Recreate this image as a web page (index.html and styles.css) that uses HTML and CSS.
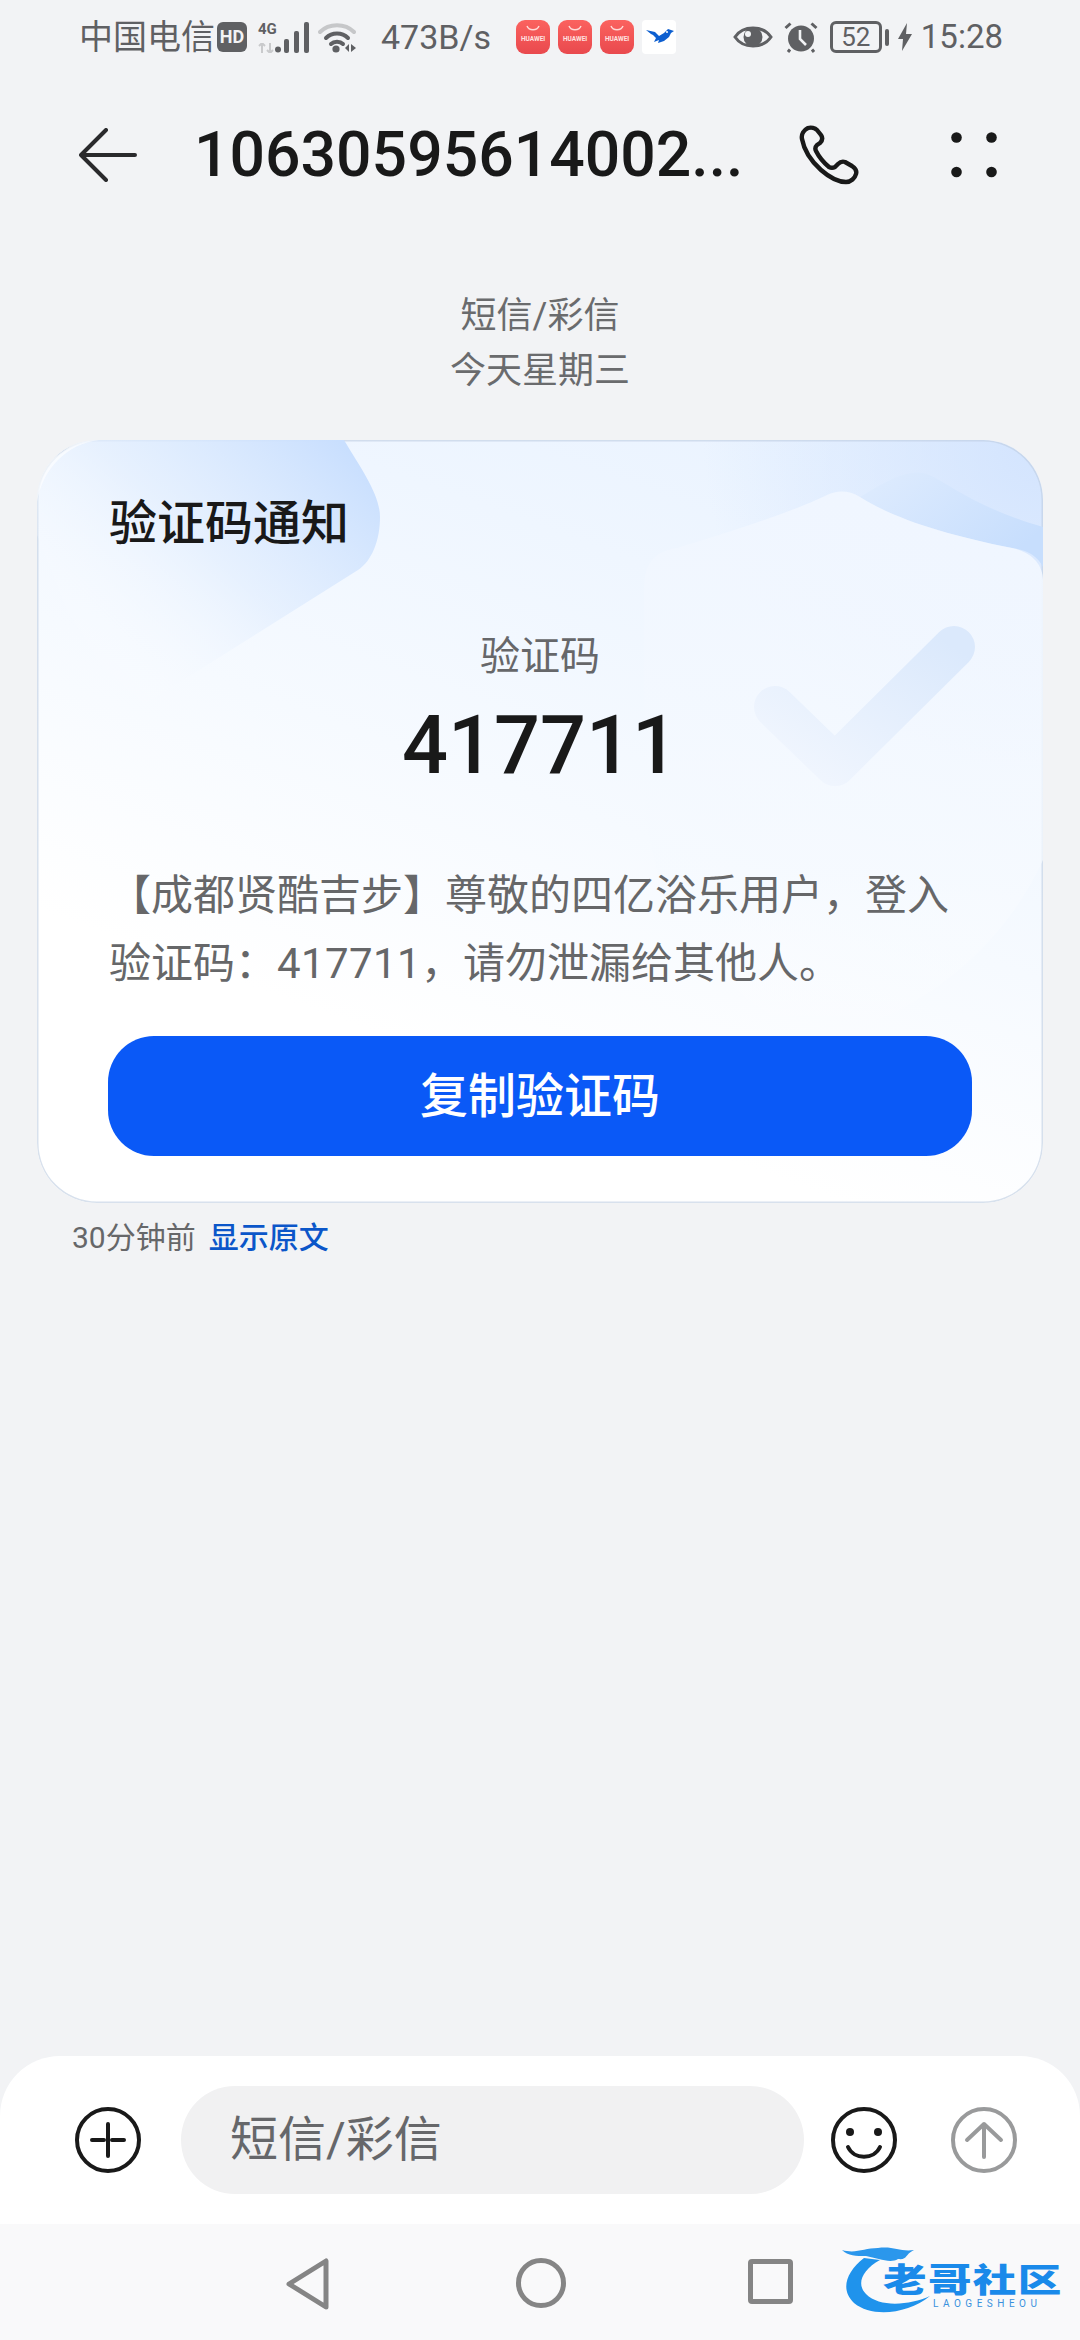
FILE: index.html
```html
<!DOCTYPE html>
<html lang="zh-CN">
<head>
<meta charset="utf-8">
<title>短信</title>
<link rel="stylesheet" href="styles.css">
</head>
<body>
<div class="phone">
  <header class="status">
    <div class="status-left">
      <span class="carrier">中国电信</span>
      <span class="hd">HD</span>
      <span class="signal">
        <span class="net"><span class="net-4g">4G</span>
          <svg class="net-arrows" viewBox="0 0 16 10" width="16" height="10"><path d="M4 0v10M1 3l3-3 3 3M12 0v10M9 7l3 3 3-3" fill="none" stroke="#c9cacc" stroke-width="2"/></svg>
        </span>
        <svg class="bars" viewBox="0 0 34 31" width="34" height="31"><circle cx="3" cy="27.500" r="3" fill="#5f6063"/><rect x="9" y="17" width="5" height="14" rx="2" fill="#5f6063"/><rect x="19" y="9" width="5" height="22" rx="2" fill="#5f6063"/><rect x="29" y="0" width="5" height="31" rx="2" fill="#5f6063"/></svg>
      </span>
      <svg class="wifi" viewBox="0 0 38 32" width="38" height="32"><path d="M2 11C11 2 27 2 36 11" fill="none" stroke="#c6c7c9" stroke-width="4" stroke-linecap="round"/><path d="M8 17C14 11 24 11 30 17" fill="none" stroke="#5f6063" stroke-width="4" stroke-linecap="round"/><path d="M13 23C16 20 22 20 25 23" fill="none" stroke="#5f6063" stroke-width="4" stroke-linecap="round"/><circle cx="18" cy="28" r="3.600" fill="#5f6063"/><path d="M27 27l4-4v8zM33 23l5 4-5 4z" fill="#5f6063"/></svg>
      <span class="speed">473B/s</span>
      <span class="apps">
        <span class="app"><svg class="app-smile" viewBox="0 0 14 6" width="14" height="6"><path d="M1 1C3 6 11 6 13 1" fill="none" stroke="#ffd9d6" stroke-width="1.500"/></svg><span class="app-name">HUAWEI</span></span>
        <span class="app"><svg class="app-smile" viewBox="0 0 14 6" width="14" height="6"><path d="M1 1C3 6 11 6 13 1" fill="none" stroke="#ffd9d6" stroke-width="1.500"/></svg><span class="app-name">HUAWEI</span></span>
        <span class="app"><svg class="app-smile" viewBox="0 0 14 6" width="14" height="6"><path d="M1 1C3 6 11 6 13 1" fill="none" stroke="#ffd9d6" stroke-width="1.500"/></svg><span class="app-name">HUAWEI</span></span>
        <span class="app app-bird"><svg viewBox="0 0 34 34" width="34" height="34"><path d="M4 10l9 2 4 4 5-3 4-4 6 2-3 2-2 4-5 4-6 2 1-3-5 2 2-4-3-3-2-1z" fill="#0d5fd0"/><circle cx="25" cy="12" r="1" fill="#fff"/></svg></span>
      </span>
    </div>
    <div class="status-right">
      <svg class="eye" viewBox="0 0 40 26" width="40" height="26"><path d="M2 13C10 1 30 1 38 13 30 25 10 25 2 13Z" fill="none" stroke="#5f6063" stroke-width="3"/><circle cx="20" cy="13" r="9.500" fill="#5f6063"/><circle cx="15" cy="10" r="3" fill="#f2f3f5"/></svg>
      <svg class="alarm" viewBox="0 0 34 31" width="34" height="31"><circle cx="17" cy="16.500" r="13" fill="#5f6063"/><path d="M1.500 6L6.500 1.500M32.500 6L27.500 1.500M6 27.500L4 30M28 27.500L30 30" stroke="#5f6063" stroke-width="3" fill="none"/><path d="M16 8v9l6 6" stroke="#f2f3f5" stroke-width="2.600" fill="none"/></svg>
      <span class="battery"><span class="battery-box">52</span><span class="battery-nub"></span></span>
      <svg class="bolt" viewBox="0 0 14 28" width="14" height="28"><path d="M9 0L0 16h5l-1 12 10-17H8z" fill="#5f6063"/></svg>
      <span class="clock">15:28</span>
    </div>
  </header>

  <nav class="toolbar">
    <svg class="back" viewBox="0 0 58 54" width="58" height="54"><path d="M27 2L2 27l25 25M2 27h54" fill="none" stroke="#2a2a2c" stroke-width="4" stroke-linecap="round" stroke-linejoin="round"/></svg>
    <h1 class="title">10630595614002...</h1>
    <svg class="call" viewBox="0 0 60 60" width="60" height="60"><path d="M9 3C5 5 2 9 3 14 5 25 12 36 22 45 30 52 39 57 47 57 52 57 56 53 57 49 58 46 56 43 53 41L46 37C43 36 41 37 39 39L36 42C34 43 32 43 30 42 24 37 20 32 17 26 16 24 16 22 18 20L21 18C23 16 24 13 22 10L18 5C16 3 12 2 9 3Z" fill="none" stroke="#191919" stroke-width="4.400" stroke-linejoin="round"/></svg>
    <svg class="more" viewBox="0 0 46 46" width="46" height="46"><circle cx="5.500" cy="5.500" r="5.300" fill="#191919"/><circle cx="40.500" cy="5.500" r="5.300" fill="#191919"/><circle cx="5.500" cy="40" r="5.300" fill="#191919"/><circle cx="40.500" cy="40" r="5.300" fill="#191919"/></svg>
  </nav>

  <main class="thread">
    <div class="thread-head">
      <p class="thread-line">短信/彩信</p>
      <p class="thread-line">今天星期三</p>
    </div>
    <article class="card">
      <svg class="card-art" viewBox="0 0 1006 763" width="1006" height="763" preserveAspectRatio="none">
        <defs>
          <linearGradient id="blob" x1="1" y1="0.15" x2="0.15" y2="0.85"><stop offset="0" stop-color="#c9dffe"/><stop offset="0.5" stop-color="#e2eefe" stop-opacity="0.7"/><stop offset="1" stop-color="#ffffff" stop-opacity="0"/></linearGradient>
          <linearGradient id="band" x1="0" y1="0" x2="1" y2="0.6"><stop offset="0" stop-color="#dfecfe"/><stop offset="1" stop-color="#c7defd"/></linearGradient>
          <linearGradient id="shield" x1="0.5" y1="0" x2="0.5" y2="1"><stop offset="0" stop-color="#f0f6ff"/><stop offset="0.7" stop-color="#f6faff" stop-opacity="0.7"/><stop offset="1" stop-color="#ffffff" stop-opacity="0"/></linearGradient>
          <linearGradient id="tick" x1="1" y1="0" x2="0" y2="1"><stop offset="0" stop-color="#dbe9fc"/><stop offset="1" stop-color="#f1f6fe"/></linearGradient>
        </defs>
        <path d="M823 57C850 40 870 30 886 33 905 37 930 65 1006 87V127C1000 115 990 110 975 108 910 95 860 80 823 57Z" fill="url(#band)"/>
        <path d="M607 150C607 125 615 112 640 108 700 90 760 70 790 55 800 50 812 50 823 57 860 80 910 95 975 108 995 112 1006 125 1006 140V420C960 520 870 580 780 600 690 560 607 480 607 340Z" fill="url(#shield)"/>
        <path d="M307 0C325 30 343 55 343 77 343 100 335 121 321 130L94 273 30 170 0 95V60C0 30 30 0 60 0Z" fill="url(#blob)"/>
        <path d="M0 62C6 28 30 4 62 0L42 0 0 30Z" fill="#ffffff" opacity="0.6"/>
        <path d="M738 267L798 325 917 207" fill="none" stroke="url(#tick)" stroke-width="42" stroke-linecap="round" stroke-linejoin="round"/>
      </svg>
      <h2 class="card-title">验证码通知</h2>
      <p class="code-label">验证码</p>
      <p class="code">417711</p>
      <p class="card-body">【成都贤酷吉步】尊敬的四亿浴乐用户，登入<br>验证码：<span class="digits">417711</span>，请勿泄漏给其他人。</p>
      <button class="copy" type="button">复制验证码</button>
    </article>
    <p class="meta"><span class="meta-time">30分钟前</span><a class="meta-link">显示原文</a></p>
  </main>

  <section class="composer">
    <svg class="tool" viewBox="0 0 66 66" width="66" height="66"><circle cx="33" cy="33" r="31" fill="none" stroke="#191919" stroke-width="4"/><path d="M33 17V49M17 33H29M37 33H49" fill="none" stroke="#191919" stroke-width="4" stroke-linecap="round"/></svg>
    <div class="input">短信/彩信</div>
    <svg class="tool" viewBox="0 0 66 66" width="66" height="66"><circle cx="33" cy="33" r="31" fill="none" stroke="#191919" stroke-width="4"/><circle cx="19" cy="25" r="4" fill="#191919"/><circle cx="47" cy="25" r="4" fill="#191919"/><path d="M17 40C23 53 43 53 49 40" fill="none" stroke="#191919" stroke-width="4" stroke-linecap="round"/></svg>
    <svg class="tool tool-send" viewBox="0 0 66 66" width="66" height="66"><circle cx="33" cy="33" r="31" fill="none" stroke="#999a9b" stroke-width="4"/><path d="M33 50V17M16 33L33 17 50 33" fill="none" stroke="#999a9b" stroke-width="4" stroke-linecap="round" stroke-linejoin="round"/></svg>
  </section>

  <footer class="navbar">
    <svg class="nav-back" viewBox="0 0 44 52" width="44" height="52"><path d="M40 3V49L3 26Z" fill="none" stroke="#858585" stroke-width="5" stroke-linejoin="round"/></svg>
    <svg class="nav-home" viewBox="0 0 50 50" width="50" height="50"><circle cx="25" cy="25" r="22.500" fill="none" stroke="#858585" stroke-width="5"/></svg>
    <span class="nav-recent"></span>
    <div class="logo">
      <svg class="logo-dragon" viewBox="0 0 110 72" width="110" height="72"><path d="M22 16C4 30-2 48 12 61 30 76 66 72 88 54 68 63 38 66 24 52 14 42 20 28 38 18Z" fill="#1f93ec"/><path d="M0 8C14 12 22 6 36 6 52 4 58 10 72 8 62 13 66 18 56 17 48 22 36 16 24 14 14 14 6 14 0 8Z" fill="#2b97ec"/></svg>
      <span class="logo-name">老哥社区</span>
      <span class="logo-sub">LAOGESHEOU</span>
    </div>
  </footer>
</div>
</body>
</html>
```
FILE: styles.css
```css
* { box-sizing: border-box; }
html, body { margin: 0; padding: 0; }
body {
  width: 1080px;
  height: 2340px;
  overflow: hidden;
  background: #f2f3f5;
  font-family: Roboto, "Noto Sans CJK SC", sans-serif;
}
p, h1, h2 { margin: 0; font-weight: 400; }
svg { display: block; flex: none; }
.phone { width: 1080px; height: 2340px; display: flex; flex-direction: column; }

/* status bar */
.status {
  height: 74px;
  padding: 0 77px 0 79px;
  display: flex;
  align-items: center;
  justify-content: space-between;
  color: #5f6063;
}
.status-left, .status-right { display: flex; align-items: center; }
.carrier { font-size: 34px; line-height: 40px; }
.hd {
  width: 30px; height: 30px; margin-left: 2px;
  border-radius: 6px;
  background: #5f6063; color: #f2f3f5;
  font-size: 18px; line-height: 30px; font-weight: 700; text-align: center;
}
.signal { display: flex; align-items: flex-end; margin-left: 11px; }
.net { width: 17px; display: flex; flex-direction: column; gap: 6px; }
.net-4g { font-size: 15px; line-height: 15px; font-weight: 700; color: #5f6063; white-space: nowrap; }
.wifi { margin-left: 9px; }
.speed { margin-left: 25px; font-size: 34px; line-height: 40px; }
.apps { display: flex; margin-left: 25px; gap: 8px; }
.app {
  width: 34px; height: 34px;
  border-radius: 9px;
  background: linear-gradient(#fb625f, #e9494e);
  display: flex; flex-direction: column; align-items: center;
  padding-top: 5px;
  overflow: hidden;
}
.app-name { font-size: 6.500px; line-height: 10px; font-weight: 700; color: #ffe3e0; margin-top: 3px; }
.app-bird { background: #fff; padding: 0; border-radius: 4px; }
.eye { margin-right: 11px; }
.alarm { margin-right: 12px; }
.battery { display: flex; align-items: center; margin-right: 9px; }
.battery-box {
  width: 52px; height: 32px;
  border: 3px solid #5f6063; border-radius: 6px;
  font-size: 26px; line-height: 26px; text-align: center;
}
.battery-nub { width: 4px; height: 17px; margin-left: 3px; background: #5f6063; border-radius: 2px; }
.bolt { margin-right: 9px; }
.clock { font-size: 33px; line-height: 40px; }

/* toolbar */
.toolbar {
  height: 66px;
  margin-top: 48px;
  padding-left: 79px;
  display: flex;
  align-items: center;
}
.back { margin-right: 57px; }
.title {
  width: 605px;
  font-size: 62.500px; line-height: 66px; font-weight: 500;
  color: #191919; white-space: nowrap;
}
.call { margin-right: 92px; }

/* thread */
.thread { flex: 1; padding: 0 37px; display: flex; flex-direction: column; }
.thread-head { margin-top: 101px; text-align: center; }
.thread-line { font-size: 36px; line-height: 55px; color: #6a6b6d; }
.card {
  position: relative;
  height: 763px;
  margin-top: 41px;
  padding: 0 72px;
  border-radius: 60px;
  background:
    radial-gradient(circle at 100% 0, #d3e4fe 0, rgba(211, 228, 254, 0) 340px),
    linear-gradient(200deg, #e8f2ff 0, #f6faff 48%, #ffffff 74%);
  box-shadow: inset 0 0 0 1.500px rgba(190, 205, 225, 0.6);
  overflow: hidden;
}
.card-art { position: absolute; left: 0; top: 0; }
.card-title, .code-label, .code, .card-body, .copy { position: relative; }
.card-title { padding-top: 50px; font-size: 48px; line-height: 68px; color: #191919; font-weight: 500; }
.code-label { margin-top: 74px; font-size: 40px; line-height: 50px; color: #66676a; text-align: center; }
.code { margin-top: 14px; font-size: 81px; line-height: 100px; font-weight: 500; color: #191919; text-align: center; }
.card-body { margin-top: 66px; font-size: 42px; line-height: 68px; color: #666769; white-space: nowrap; }
.digits { letter-spacing: 0.400px; }
.copy {
  display: block;
  width: 864px; height: 120px;
  margin: 38px 0 0 -1px;
  border: 0; border-radius: 46px;
  background: #0a59f7; color: #fff;
  font: 500 48px/120px Roboto, "Noto Sans CJK SC", sans-serif;
}
.meta { margin: 15px 0 0 35px; display: flex; gap: 13px; font-size: 30px; line-height: 40px; }
.meta-time { color: #666769; }
.meta-link { color: #0b56c9; font-weight: 500; }

/* composer */
.composer {
  height: 168px;
  padding: 0 62px 0 75px;
  display: flex;
  align-items: center;
  background: #fff;
  border-radius: 60px 60px 0 0;
}
.input {
  width: 623px; height: 108px;
  margin: 0 27px 0 40px;
  padding-left: 49px;
  border-radius: 54px;
  background: #f1f1f2; color: #66676a;
  font-size: 48px; line-height: 108px;
}
.tool-send { margin-left: 54px; }

/* navigation bar */
.navbar {
  position: relative;
  height: 116px;
  padding: 34px 0 0 286px;
  display: flex;
  align-items: flex-start;
  background: #f9f9fa;
}
.nav-back { margin-right: 186px; }
.nav-home { margin-right: 182px; }
.nav-recent { width: 45px; height: 45px; margin-top: 1px; border: 5px solid #858585; border-radius: 4px; }
.logo { position: absolute; left: 842px; top: 18px; width: 222px; height: 72px; }
.logo-dragon { position: absolute; left: 0; top: 0; }
.logo-name {
  position: absolute; left: 41px; top: 24px;
  font-size: 33px; line-height: 30px; font-weight: 900; letter-spacing: 1px;
  color: #1a8aea; white-space: nowrap;
  transform: scaleX(1.32); transform-origin: left center;
}
.logo-sub {
  position: absolute; left: 91px; top: 56px;
  font-size: 10px; line-height: 11px; letter-spacing: 4.500px; color: #3a91dd; white-space: nowrap;
}
```
